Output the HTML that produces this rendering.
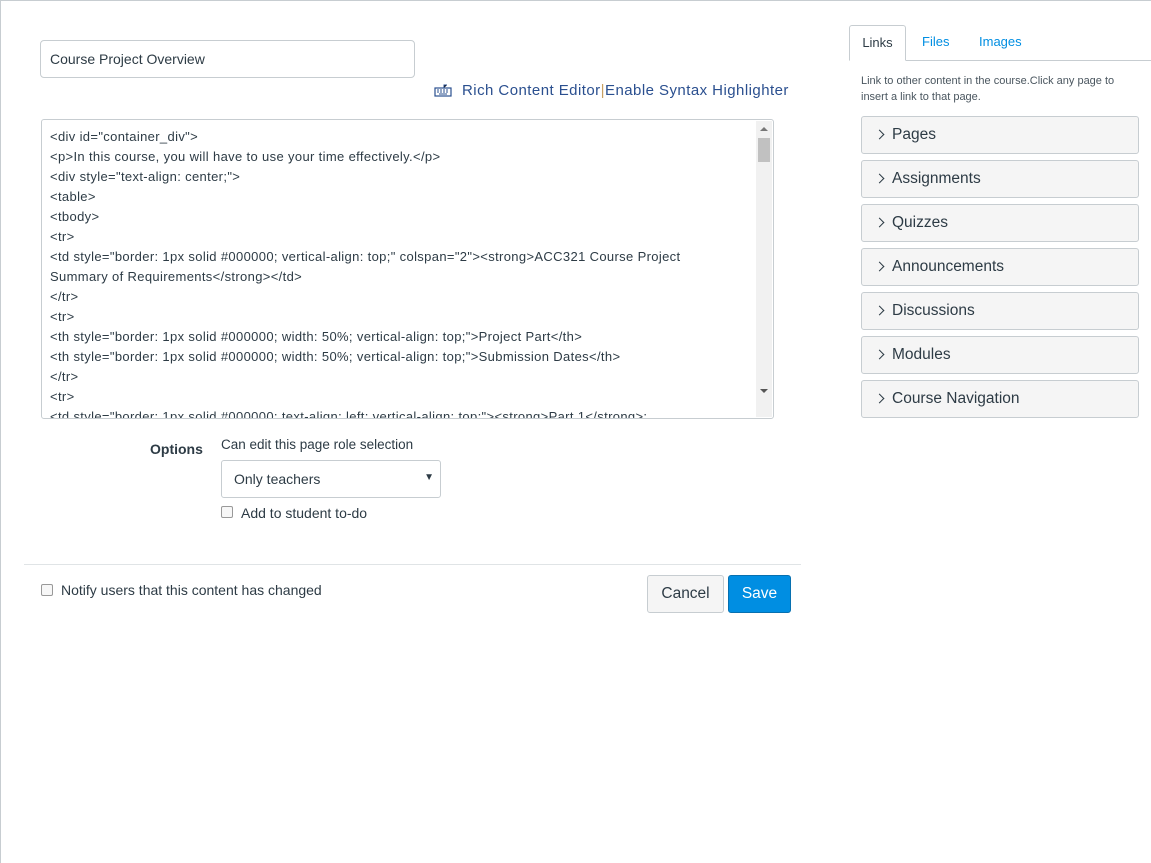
<!DOCTYPE html>
<html><head><style>
*{box-sizing:border-box;margin:0;padding:0}
body{width:1151px;height:863px;background:#fff;font-family:"Liberation Sans",sans-serif;color:#2d3b45;position:relative;overflow:hidden}
.abs{position:absolute}
.title{left:40px;top:40px;width:375px;height:38px;border:1px solid #c7cdd1;border-radius:4px;font-size:14px;padding:10px 9px;color:#2d3b45}
.links{left:434px;top:82px;font-size:15px;color:#2a4f8f;letter-spacing:0.45px}
.ta{left:41px;top:119px;width:733px;height:300px;border:1px solid #c7cdd1;border-radius:3px;overflow:hidden}
.code{position:absolute;left:8px;top:7px;font-size:13px;line-height:20px;color:#2d3b45;white-space:pre;letter-spacing:0.35px}
.sb{position:absolute;right:1px;top:1px;width:16px;bottom:1px;background:#f1f1f1}
.thumb{position:absolute;left:2px;top:17px;width:12px;height:24px;background:#c1c1c1}
.tab{top:25px;height:36px;font-size:13px;padding-top:9px}
.acc{left:861px;width:278px;height:38px;background:#f5f5f5;border:1px solid #c7cdd1;border-radius:3px;font-size:15.5px;padding:9px 0 0 30px;color:#2d3b45}
.acc:before{content:"";position:absolute;left:14px;top:14px;width:6px;height:6px;border-right:1.5px solid #2d3b45;border-top:1.5px solid #2d3b45;transform:rotate(45deg)}
.cb{width:12px;height:12px;border:1px solid #999;border-radius:2px;background:#f7f7f7}
</style></head><body>
<div class="abs" style="left:0;top:0;width:1151px;height:1px;background:#c7cdd1"></div>
<div class="abs" style="left:0;top:0;width:1px;height:863px;background:#c7cdd1"></div>
<div class="abs title">Course Project Overview</div>
<div class="abs links"><svg width="18" height="14" viewBox="0 0 18 14" style="vertical-align:-2px;margin-right:10px"><rect x="1" y="5" width="16" height="8" fill="none" stroke="#2a4f8f" stroke-width="1.2"/><path d="M3 7h2M6 7h2M9 7h2M12 7h2M3 9h2M6 9h2M9 9h2M12 9h2M5 11h8M10 5V2h3" stroke="#2a4f8f" stroke-width="1"/></svg>Rich Content Editor<span style="color:#c8a062">|</span>Enable Syntax Highlighter</div>
<div class="abs ta"><div class="code">&lt;div id="container_div"&gt;
&lt;p&gt;In this course, you will have to use your time effectively.&lt;/p&gt;
&lt;div style="text-align: center;"&gt;
&lt;table&gt;
&lt;tbody&gt;
&lt;tr&gt;
&lt;td style="border: 1px solid #000000; vertical-align: top;" colspan="2"&gt;&lt;strong&gt;ACC321 Course Project
Summary of Requirements&lt;/strong&gt;&lt;/td&gt;
&lt;/tr&gt;
&lt;tr&gt;
&lt;th style="border: 1px solid #000000; width: 50%; vertical-align: top;"&gt;Project Part&lt;/th&gt;
&lt;th style="border: 1px solid #000000; width: 50%; vertical-align: top;"&gt;Submission Dates&lt;/th&gt;
&lt;/tr&gt;
&lt;tr&gt;
&lt;td style="border: 1px solid #000000; text-align: left; vertical-align: top;"&gt;&lt;strong&gt;Part 1&lt;/strong&gt;:</div>
<div class="sb"><div style="position:absolute;left:4px;top:6px;border:4px solid transparent;border-bottom:4px solid #777;border-top:0"></div><div class="thumb"></div><div style="position:absolute;left:4px;bottom:24px;border:4px solid transparent;border-top:4px solid #555;border-bottom:0"></div></div></div>
<div class="abs" style="left:150px;top:441px;font-size:14px;font-weight:bold;color:#2d3b45">Options</div>
<div class="abs" style="left:221px;top:437px;font-size:13.5px">Can edit this page role selection</div>
<div class="abs" style="left:221px;top:460px;width:220px;height:38px;border:1px solid #c7cdd1;border-radius:3px;font-size:14px;padding:10px 12px">Only teachers<span style="position:absolute;right:6px;top:11px;font-size:10px">▼</span></div>
<div class="abs cb" style="left:221px;top:506px"></div>
<div class="abs" style="left:241px;top:505px;font-size:14px">Add to student to-do</div>
<div class="abs" style="left:24px;top:564px;width:777px;height:1px;background:#e0e4e6"></div>
<div class="abs cb" style="left:41px;top:584px"></div>
<div class="abs" style="left:61px;top:582px;font-size:14px">Notify users that this content has changed</div>
<div class="abs" style="left:647px;top:575px;width:77px;height:38px;background:#f5f5f5;border:1px solid #c7cdd1;border-radius:3px;font-size:15.5px;text-align:center;padding-top:9px">Cancel</div>
<div class="abs" style="left:728px;top:575px;width:63px;height:38px;background:#008ee2;border:1px solid #0770b0;border-radius:3px;font-size:15.5px;color:#fff;text-align:center;padding-top:9px">Save</div>
<div class="abs" style="left:849px;top:60px;width:302px;height:1px;background:#c7cdd1"></div>
<div class="abs tab" style="left:849px;width:57px;border:1px solid #c7cdd1;border-bottom:1px solid #fff;border-radius:3px 3px 0 0;text-align:center;background:#fff;height:36px">Links</div>
<div class="abs tab" style="left:922px;color:#008ee2">Files</div>
<div class="abs tab" style="left:979px;color:#008ee2">Images</div>
<div class="abs" style="left:861px;top:73px;font-size:11px;line-height:16px;color:#4a565f;width:280px">Link to other content in the course.Click any page to insert a link to that page.</div>
<div class="abs acc" style="top:116px">Pages</div>
<div class="abs acc" style="top:160px">Assignments</div>
<div class="abs acc" style="top:204px">Quizzes</div>
<div class="abs acc" style="top:248px">Announcements</div>
<div class="abs acc" style="top:292px">Discussions</div>
<div class="abs acc" style="top:336px">Modules</div>
<div class="abs acc" style="top:380px">Course Navigation</div>
</body></html>
